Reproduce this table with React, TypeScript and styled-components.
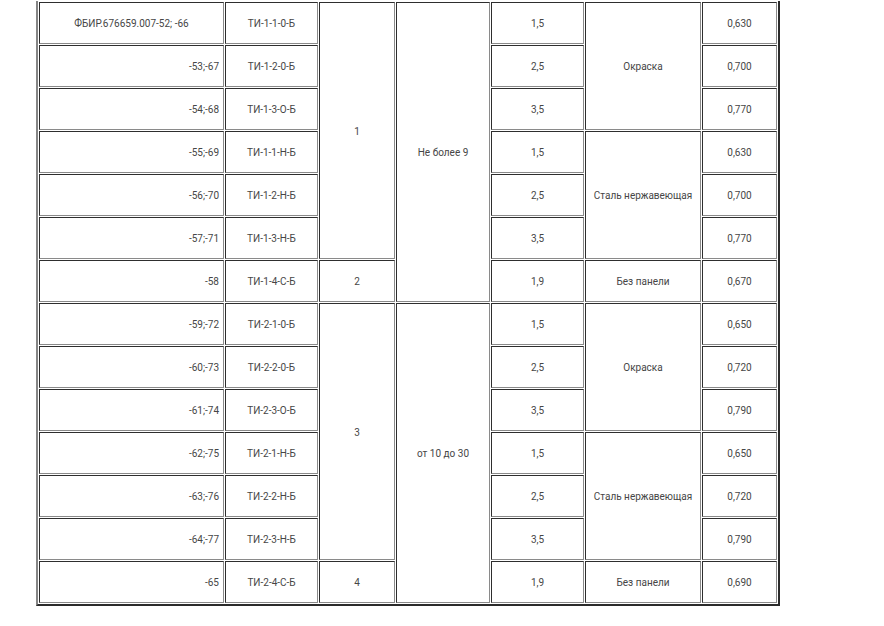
import React from 'react';
import styled, { createGlobalStyle } from 'styled-components';

const GlobalStyle = createGlobalStyle`
    html, body {
        margin: 0;
        padding: 0;
        background: #fff;
    }
    body {
        font-family: Roboto, 'Liberation Sans', Arial, sans-serif;
    }
`;

type Align = 'left' | 'center' | 'right';

interface Cell {
    text: string;
    rowSpan?: number;
    align?: Align;
}

const widths = [185, 93, 76, 94, 93, 116, 75];

const rows: Cell[][] = [
    [
        { text: 'ФБИР.676659.007-52; -66', align: 'center' },
        { text: 'ТИ-1-1-0-Б' },
        { text: '1', rowSpan: 6 },
        { text: 'Не более 9', rowSpan: 7 },
        { text: '1,5' },
        { text: 'Окраска', rowSpan: 3 },
        { text: '0,630' },
    ],
    [{ text: '-53;-67', align: 'right' }, { text: 'ТИ-1-2-0-Б' }, { text: '2,5' }, { text: '0,700' }],
    [{ text: '-54;-68', align: 'right' }, { text: 'ТИ-1-3-О-Б' }, { text: '3,5' }, { text: '0,770' }],
    [
        { text: '-55;-69', align: 'right' },
        { text: 'ТИ-1-1-Н-Б' },
        { text: '1,5' },
        { text: 'Сталь нержавеющая', rowSpan: 3 },
        { text: '0,630' },
    ],
    [{ text: '-56;-70', align: 'right' }, { text: 'ТИ-1-2-Н-Б' }, { text: '2,5' }, { text: '0,700' }],
    [{ text: '-57;-71', align: 'right' }, { text: 'ТИ-1-3-Н-Б' }, { text: '3,5' }, { text: '0,770' }],
    [
        { text: '-58', align: 'right' },
        { text: 'ТИ-1-4-С-Б' },
        { text: '2' },
        { text: '1,9' },
        { text: 'Без панели' },
        { text: '0,670' },
    ],
    [
        { text: '-59;-72', align: 'right' },
        { text: 'ТИ-2-1-0-Б' },
        { text: '3', rowSpan: 6 },
        { text: 'от 10 до 30', rowSpan: 7 },
        { text: '1,5' },
        { text: 'Окраска', rowSpan: 3 },
        { text: '0,650' },
    ],
    [{ text: '-60;-73', align: 'right' }, { text: 'ТИ-2-2-0-Б' }, { text: '2,5' }, { text: '0,720' }],
    [{ text: '-61;-74', align: 'right' }, { text: 'ТИ-2-3-О-Б' }, { text: '3,5' }, { text: '0,790' }],
    [
        { text: '-62;-75', align: 'right' },
        { text: 'ТИ-2-1-Н-Б' },
        { text: '1,5' },
        { text: 'Сталь нержавеющая', rowSpan: 3 },
        { text: '0,650' },
    ],
    [{ text: '-63;-76', align: 'right' }, { text: 'ТИ-2-2-Н-Б' }, { text: '2,5' }, { text: '0,720' }],
    [{ text: '-64;-77', align: 'right' }, { text: 'ТИ-2-3-Н-Б' }, { text: '3,5' }, { text: '0,790' }],
    [
        { text: '-65', align: 'right' },
        { text: 'ТИ-2-4-С-Б' },
        { text: '4' },
        { text: '1,9' },
        { text: 'Без панели' },
        { text: '0,690' },
    ],
];

const Page = styled.div`
    padding: 1px 0 0 36px;
`;

const Table = styled.table`
    table-layout: fixed;
    width: 744px;
    border-collapse: separate;
    border-spacing: 1px;
    border-style: solid;
    border-width: 0 2px 2px 2px;
    border-color: #858585 #2b2b2b #2b2b2b #858585;
    font-size: 10px;
    color: #464646;
`;

const Row = styled.tr`
    height: 42px;
`;

const Td = styled.td<{ $align: Align }>`
    box-sizing: border-box;
    padding: 1px 4px 0;
    border: 1px solid;
    border-color: #2e2e2e #8a8a8a #8a8a8a #2e2e2e;
    text-align: ${(p) => p.$align};
    vertical-align: middle;
    white-space: nowrap;
`;

const App = () => {
    return (
        <>
            <GlobalStyle />
            <Page>
                <Table>
                    <colgroup>
                        {widths.map((w, i) => (
                            <col key={i} style={{ width: w }} />
                        ))}
                    </colgroup>
                    <tbody>
                        {rows.map((row, r) => (
                            <Row key={r}>
                                {row.map((cell, c) => (
                                    <Td key={c} rowSpan={cell.rowSpan} $align={cell.align ?? 'center'}>
                                        {cell.text}
                                    </Td>
                                ))}
                            </Row>
                        ))}
                    </tbody>
                </Table>
            </Page>
        </>
    );
};

export default App;
